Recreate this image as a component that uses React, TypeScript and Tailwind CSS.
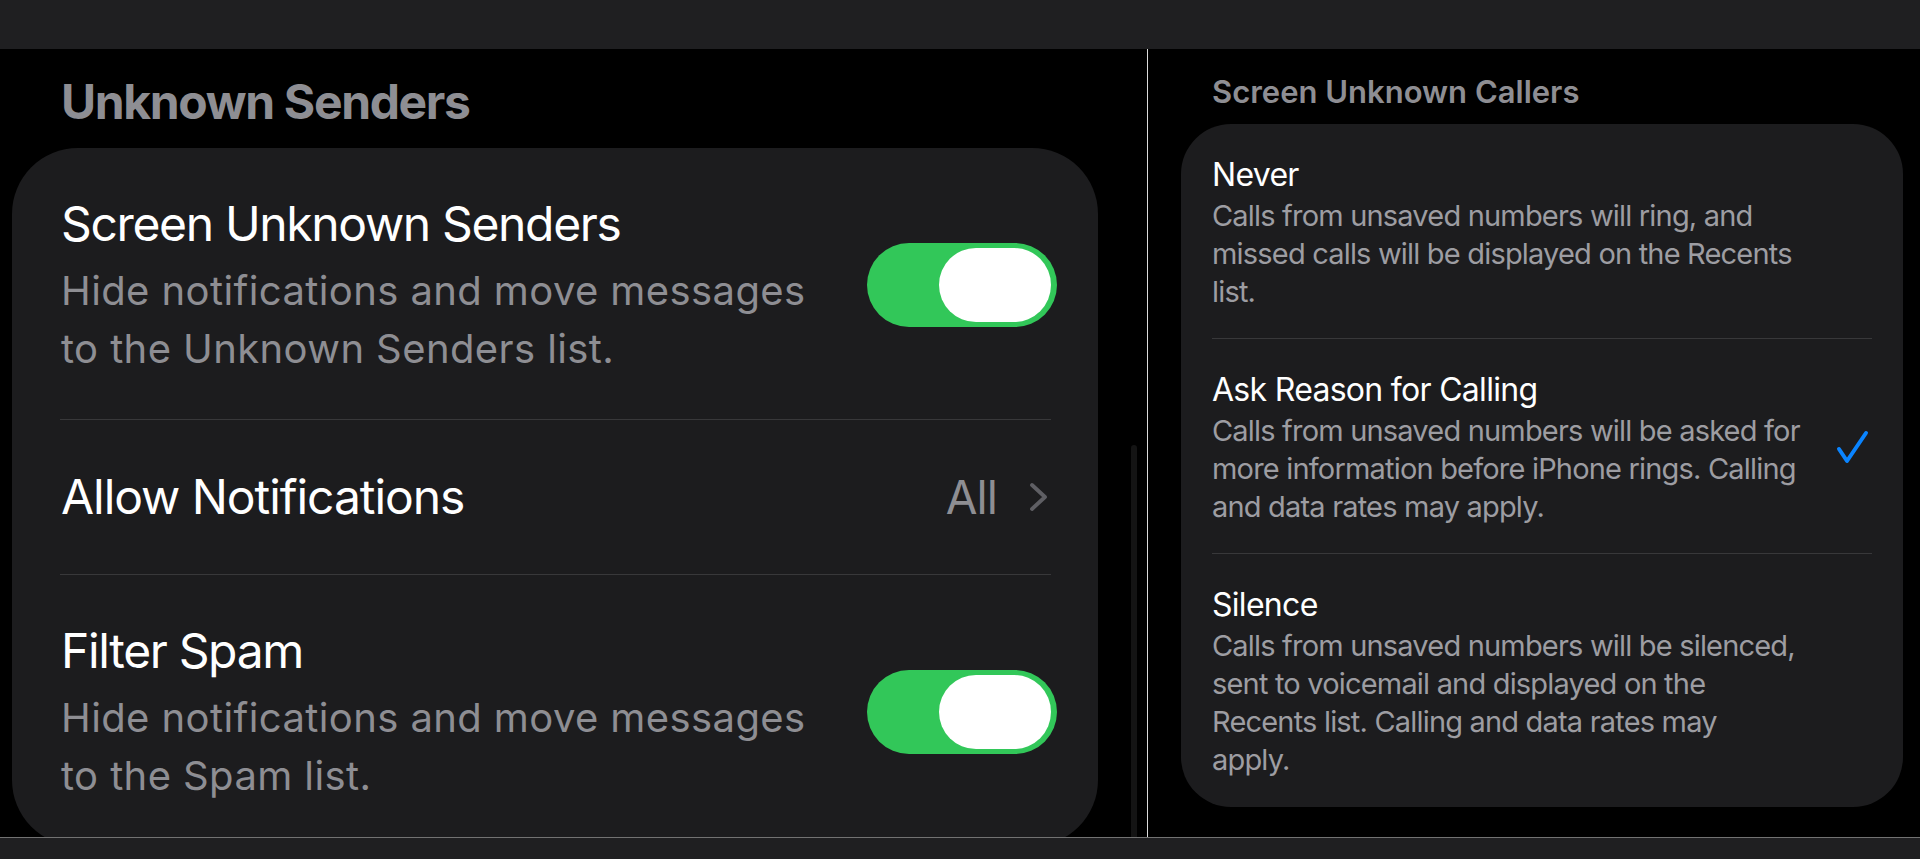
const font = { fontFamily: 'Inter, "Liberation Sans", sans-serif' };

function Toggle() {
  return (
    <div className="flex h-[84px] w-[190px] shrink-0 items-center justify-end rounded-full bg-[#32c759] pr-[6px]">
      <div className="h-[74px] w-[112px] rounded-full bg-white" />
    </div>
  );
}

function Check() {
  return (
    <svg width="36" height="36" viewBox="0 0 36 36" className="shrink-0">
      <path d="M5 19 L13 31 L32 3" fill="none" stroke="#0a84ff" strokeWidth="4" strokeLinecap="round" strokeLinejoin="round" />
    </svg>
  );
}

function Chevron() {
  return (
    <svg width="21" height="30" viewBox="0 0 21 30" className="shrink-0">
      <path d="M4 3 L17 15 L4 27" fill="none" stroke="#5f5f64" strokeWidth="3.8" strokeLinecap="round" strokeLinejoin="round" />
    </svg>
  );
}

const callerOptions = [
  {
    title: 'Never',
    lines: ['Calls from unsaved numbers will ring, and', 'missed calls will be displayed on the Recents', 'list.'],
    selected: false,
  },
  {
    title: 'Ask Reason for Calling',
    lines: ['Calls from unsaved numbers will be asked for', 'more information before iPhone rings. Calling', 'and data rates may apply.'],
    selected: true,
  },
  {
    title: 'Silence',
    lines: ['Calls from unsaved numbers will be silenced,', 'sent to voicemail and displayed on the', 'Recents list. Calling and data rates may', 'apply.'],
    selected: false,
  },
];

function SendersPanel() {
  return (
    <div className="relative h-full w-[1147px] shrink-0 overflow-hidden px-[12px]">
      <h2 className="pl-[49px] pt-[27px] text-[48px] font-bold leading-[52px] tracking-[-0.028em] text-[#8e8e93]">
        Unknown Senders
      </h2>

      <div className="mt-[20px] w-[1086px] rounded-[66px] bg-[#1c1c1e] pl-[48px] pr-[47px]">
        <div className="flex items-center justify-between border-b border-[#38383a] pb-[41px] pl-px pt-[44px]">
          <div>
            <div className="text-[48px] leading-[64px] tracking-[-0.028em] text-white">Screen Unknown Senders</div>
            <div className="mt-[6px] text-[40px] leading-[58px] tracking-[0.01em] text-[#8e8e93]">
              Hide notifications and move messages
              <br />
              to the Unknown Senders list.
            </div>
          </div>
          <div className="-mr-[6px]">
            <Toggle />
          </div>
        </div>

        <div className="flex h-[155px] items-center justify-between border-b border-[#38383a] pl-px">
          <div className="text-[48px] leading-[64px] tracking-[-0.022em] text-white">Allow Notifications</div>
          <div className="mr-[2px] flex items-center gap-[31px]">
            <span className="text-[46px] leading-[64px] tracking-[-0.02em] text-[#8e8e93]">All</span>
            <Chevron />
          </div>
        </div>

        <div className="flex items-center justify-between pb-[41px] pl-px pt-[44px]">
          <div>
            <div className="text-[48px] leading-[64px] tracking-[-0.028em] text-white">Filter Spam</div>
            <div className="mt-[6px] text-[40px] leading-[58px] tracking-[0.01em] text-[#8e8e93]">
              Hide notifications and move messages
              <br />
              to the Spam list.
            </div>
          </div>
          <div className="-mr-[6px]">
            <Toggle />
          </div>
        </div>
      </div>

      {/* scroll indicator */}
      <div className="absolute bottom-0 left-[1131px] top-[396px] w-[6px] rounded-t-full bg-[#141414]" />
    </div>
  );
}

function CallersPanel() {
  return (
    <div className="h-full flex-1 pl-[33px] pr-[17px]">
      <h3 className="pl-[31px] pt-[24px] text-[31px] font-semibold leading-[38px] text-[#8e8e93]">
        Screen Unknown Callers
      </h3>
      <div className="mt-[13px] rounded-[50px] bg-[#1c1c1e] px-[31px]">
        {callerOptions.map((opt, i) => (
          <div
            key={opt.title}
            className={`flex items-center justify-between pt-[31px] ${
              i < callerOptions.length - 1 ? 'border-b border-[#38383a] pb-[27px]' : 'pb-[28px]'
            }`}
          >
            <div>
              <div className="text-[32px] leading-[40px] tracking-[-0.022em] text-white">{opt.title}</div>
              <div className="mt-[2px] text-[29px] leading-[38px] tracking-[-0.028em] text-[#9d9da2]">
                {opt.lines.map((line) => (
                  <div key={line}>{line}</div>
                ))}
              </div>
            </div>
            {opt.selected && (
              <div className="mr-[2px]">
                <Check />
              </div>
            )}
          </div>
        ))}
      </div>
    </div>
  );
}

export default function App() {
  return (
    <div className="flex h-[859px] w-[1920px] flex-col overflow-hidden bg-black" style={font}>
      <div className="h-[49px] shrink-0 bg-[#1f1f21]" />
      <div className="flex h-[788px] shrink-0">
        <SendersPanel />
        <div className="w-px shrink-0 bg-[#dcdcdc]" />
        <CallersPanel />
      </div>
      <div className="h-[22px] shrink-0 border-t border-[#727272] bg-[#1f1f21]" />
    </div>
  );
}
